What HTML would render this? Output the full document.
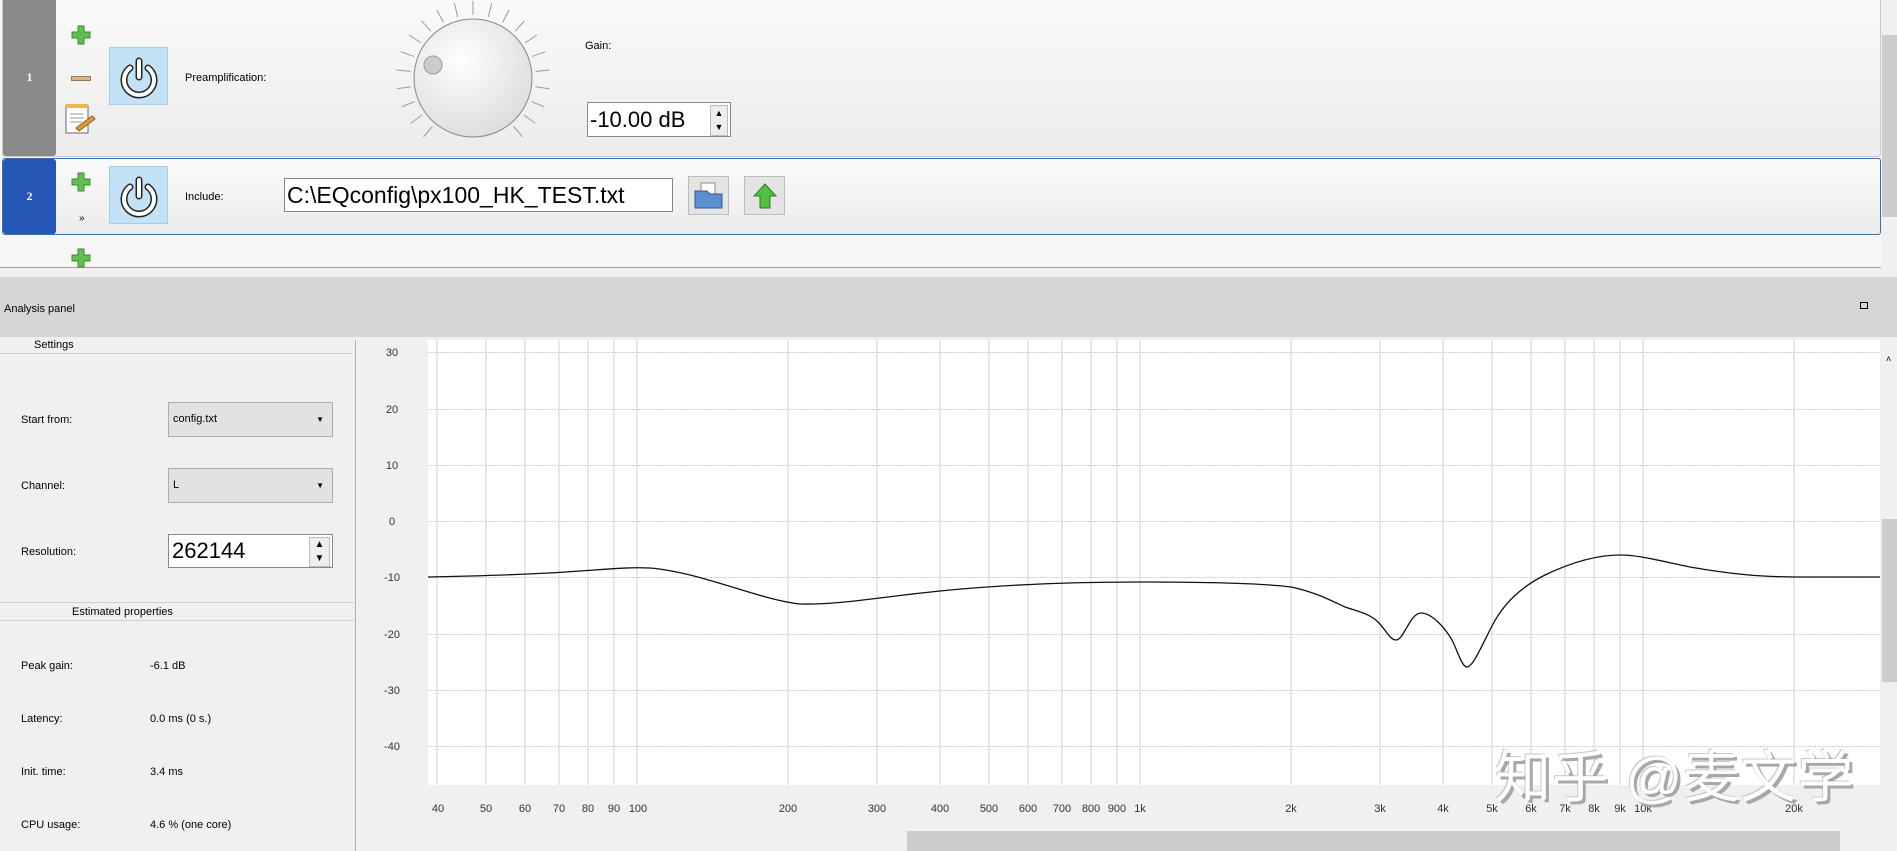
<!DOCTYPE html>
<html><head><meta charset="utf-8"><style>
body{margin:0;width:1897px;height:851px;overflow:hidden;background:#f0f0f0;font-family:"Liberation Sans",sans-serif;font-size:11px;color:#000;position:relative}
.a{position:absolute}
.row{position:absolute;left:2px;width:1877px;background:linear-gradient(#fafafa,#ececec);border:1px solid #c8c8c8;border-radius:3px}
.tab{position:absolute;left:0;top:0;bottom:0;width:54px;color:#fff;font-family:"Liberation Serif",serif;font-weight:bold;font-size:12px;display:flex;align-items:center;justify-content:center;border-radius:3px}
.pw{position:absolute;width:59px;height:58px;background:#c4e2f6;border:1px solid #a9cde6;box-sizing:border-box}
.cb{position:absolute;left:168px;width:165px;height:35px;border:1px solid #adadad;background:#e2e2e2;box-sizing:border-box;font-size:11px;line-height:33px;padding-left:4px}
.cb:after{content:"▼";position:absolute;right:8px;font-size:8px}
.lbl{position:absolute;left:21px}
.val{position:absolute;left:150px}
</style></head><body>
<div class="a" style="left:0;top:0;width:1881px;height:267px;border-bottom:1px solid #a0a0a0;background:#f6f6f6"></div>
<div class="row" style="top:-3px;height:158px"><div class="tab" style="background:#8a8a8a;width:53px">1</div></div>
<div class="row" style="top:158px;height:75px;border-color:#3c6fb0"><div class="tab" style="background:#2457b5;width:53px">2</div></div>
<svg class="a" style="left:71px;top:25px" width="20" height="20"><path d="M7 1h6v6h6v6h-6v6H7v-6H1V7h6z" fill="#5fbf4f" stroke="#3c8a30"/></svg>
<svg class="a" style="left:71px;top:172px" width="20" height="20"><path d="M7 1h6v6h6v6h-6v6H7v-6H1V7h6z" fill="#5fbf4f" stroke="#3c8a30"/></svg>
<svg class="a" style="left:71px;top:248px" width="20" height="20"><path d="M7 1h6v6h6v6h-6v6H7v-6H1V7h6z" fill="#5fbf4f" stroke="#3c8a30"/></svg>
<div class="a" style="left:71px;top:76px;width:20px;height:5px;background:#d8b88a;border:1px solid #9a7a50;box-sizing:border-box"></div>
<svg class="a" style="left:64px;top:102px" width="34" height="34"><rect x="2" y="4" width="22" height="27" fill="#fff" stroke="#666"/><rect x="2" y="2" width="22" height="4" fill="#e8b84a"/><path d="M6 12h14M6 16h14M6 20h12" stroke="#999"/><path d="M12 26l16-12 3 3-16 12z" fill="#e89a30" stroke="#8a5a20"/></svg>
<div class="a" style="left:79px;top:213px;font-size:10px">»</div>
<div class="pw" style="left:109px;top:47px"><svg width="58" height="58"><path d="M20 20a15 15 0 1 0 18 0" fill="none" stroke="#222" stroke-width="7" stroke-linecap="round"/><path d="M20 20a15 15 0 1 0 18 0" fill="none" stroke="#fff" stroke-width="4" stroke-linecap="round"/><path d="M29 13v16" stroke="#222" stroke-width="7" stroke-linecap="round"/><path d="M29 13v16" stroke="#fff" stroke-width="4" stroke-linecap="round"/></svg></div>
<div class="pw" style="left:109px;top:166px"><svg width="58" height="58"><path d="M20 20a15 15 0 1 0 18 0" fill="none" stroke="#222" stroke-width="7" stroke-linecap="round"/><path d="M20 20a15 15 0 1 0 18 0" fill="none" stroke="#fff" stroke-width="4" stroke-linecap="round"/><path d="M29 13v16" stroke="#222" stroke-width="7" stroke-linecap="round"/><path d="M29 13v16" stroke="#fff" stroke-width="4" stroke-linecap="round"/></svg></div>
<div class="a" style="left:185px;top:72px">Preamplification:</div>
<div class="a" style="left:185px;top:191px">Include:</div>
<svg class="a" style="left:393px;top:-2px" width="160" height="160">
<g stroke="#999" stroke-width="1">
<g transform="translate(80,80)">
<line x1="0" y1="-63" x2="0" y2="-77" transform="rotate(-140)"/><line x1="0" y1="-63" x2="0" y2="-77" transform="rotate(-126)"/><line x1="0" y1="-63" x2="0" y2="-77" transform="rotate(-112)"/><line x1="0" y1="-63" x2="0" y2="-77" transform="rotate(-98)"/><line x1="0" y1="-63" x2="0" y2="-77" transform="rotate(-84)"/><line x1="0" y1="-63" x2="0" y2="-77" transform="rotate(-70)"/><line x1="0" y1="-63" x2="0" y2="-77" transform="rotate(-56)"/><line x1="0" y1="-63" x2="0" y2="-77" transform="rotate(-42)"/><line x1="0" y1="-63" x2="0" y2="-77" transform="rotate(-28)"/><line x1="0" y1="-63" x2="0" y2="-77" transform="rotate(-14)"/><line x1="0" y1="-63" x2="0" y2="-77"/><line x1="0" y1="-63" x2="0" y2="-77" transform="rotate(14)"/><line x1="0" y1="-63" x2="0" y2="-77" transform="rotate(28)"/><line x1="0" y1="-63" x2="0" y2="-77" transform="rotate(42)"/><line x1="0" y1="-63" x2="0" y2="-77" transform="rotate(56)"/><line x1="0" y1="-63" x2="0" y2="-77" transform="rotate(70)"/><line x1="0" y1="-63" x2="0" y2="-77" transform="rotate(84)"/><line x1="0" y1="-63" x2="0" y2="-77" transform="rotate(98)"/><line x1="0" y1="-63" x2="0" y2="-77" transform="rotate(112)"/><line x1="0" y1="-63" x2="0" y2="-77" transform="rotate(126)"/><line x1="0" y1="-63" x2="0" y2="-77" transform="rotate(140)"/>
</g></g>
<defs><radialGradient id="kg" cx="0.4" cy="0.35" r="0.7"><stop offset="0" stop-color="#fff"/><stop offset="1" stop-color="#dcdcdc"/></radialGradient></defs>
<circle cx="80" cy="80" r="59" fill="url(#kg)" stroke="#888"/>
<circle cx="40" cy="67" r="9" fill="#ccc" stroke="#999"/>
</svg>
<div class="a" style="left:585px;top:40px">Gain:</div>
<div class="a" style="left:587px;top:102px;width:144px;height:35px;background:#fff;border:1px solid #888;box-sizing:border-box;font-size:22px;line-height:33px;padding-left:2px">-10.00 dB<div class="a" style="right:2px;top:2px;width:16px;height:29px;background:#eee;border:1px solid #bbb;font-size:9px;line-height:14px;text-align:center">▲<br>▼</div></div>
<div class="a" style="left:284px;top:178px;width:389px;height:34px;background:#fff;border:1px solid #888;box-sizing:border-box;font-size:23px;line-height:32px;padding-left:2px">C:\EQconfig\px100_HK_TEST.txt</div>
<div class="a" style="left:688px;top:176px;width:41px;height:39px;background:#e4e4e4;border:1px solid #bbb;box-sizing:border-box"><svg width="40" height="38"><rect x="12" y="6" width="14" height="14" fill="#fff" stroke="#888"/><path d="M6 14h12l3 3h12v14H6z" fill="#5a8fd0" stroke="#2f5a90"/></svg></div>
<div class="a" style="left:744px;top:176px;width:41px;height:39px;background:#e4e4e4;border:1px solid #bbb;box-sizing:border-box"><svg width="40" height="38"><path d="M20 7l11 12h-6v12h-10V19H9z" fill="#4fc040" stroke="#2a7a20"/></svg></div>
<div class="a" style="left:1882px;top:0;width:15px;height:267px;background:#f0f0f0"></div>
<div class="a" style="left:1882px;top:35px;width:15px;height:182px;background:#cdcdcd"></div>
<div class="a" style="left:0;top:277px;width:1897px;height:60px;background:#d6d6d6"></div>
<div class="a" style="left:4px;top:303px;font-size:11px">Analysis panel</div>
<div class="a" style="left:1860px;top:302px;width:8px;height:7px;border:1px solid #000;box-sizing:border-box"></div>
<div class="a" style="left:0;top:353px;width:352px;border-top:1px solid #d0d0d0"></div>
<div class="a" style="left:28px;top:339px;background:#f0f0f0;padding:0 6px">Settings</div>
<div class="lbl" style="top:414px">Start from:</div><div class="cb" style="top:402px">config.txt</div>
<div class="lbl" style="top:480px">Channel:</div><div class="cb" style="top:468px">L</div>
<div class="lbl" style="top:546px">Resolution:</div>
<div class="a" style="left:168px;top:534px;width:165px;height:34px;background:#fff;border:1px solid #888;box-sizing:border-box;font-size:22px;line-height:32px;padding-left:3px">262144<div class="a" style="right:2px;top:2px;width:19px;height:28px;background:#eee;border:1px solid #bbb;font-size:10px;line-height:14px;text-align:center">▲<br>▼</div></div>
<div class="a" style="left:0;top:602px;width:354px;border-top:1px solid #d0d0d0"></div>
<div class="a" style="left:0;top:620px;width:354px;border-top:1px solid #d0d0d0"></div>
<div class="a" style="left:66px;top:606px;background:#f0f0f0;padding:0 6px">Estimated properties</div>
<div class="lbl" style="top:660px">Peak gain:</div><div class="val" style="top:660px">-6.1 dB</div>
<div class="lbl" style="top:713px">Latency:</div><div class="val" style="top:713px">0.0 ms (0 s.)</div>
<div class="lbl" style="top:766px">Init. time:</div><div class="val" style="top:766px">3.4 ms</div>
<div class="lbl" style="top:819px">CPU usage:</div><div class="val" style="top:819px">4.6 % (one core)</div>
<div class="a" style="left:355px;top:340px;width:1542px;height:511px;border-left:1px solid #b0b0b0;background:#f0f0f0"></div>
<svg class="a" style="left:0;top:0" width="1897" height="851" font-family="Liberation Sans" font-size="11" fill="#333">
<rect x="428" y="340" width="1452" height="445" fill="#fff"/>
<g stroke="#d0d0d0" stroke-width="1">
<path d="M437 340V785M486 340V785M525 340V785M559 340V785M588 340V785M614 340V785M637 340V785M788 340V785M877 340V785M940 340V785M989 340V785M1028 340V785M1062 340V785M1091 340V785M1117 340V785M1140 340V785M1291 340V785M1380 340V785M1443 340V785M1492 340V785M1531 340V785M1565 340V785M1594 340V785M1620 340V785M1643 340V785M1794 340V785"/>
<path d="M428 352.5H1880M428 409.5H1880M428 465.5H1880M428 521.5H1880M428 577.5H1880M428 634.5H1880M428 690.5H1880M428 746.5H1880" stroke-dasharray="2 1"/>
</g>
<g text-anchor="middle"><text x="392" y="356">30</text><text x="392" y="413">20</text><text x="392" y="469">10</text><text x="392" y="525">0</text><text x="392" y="581">-10</text><text x="392" y="638">-20</text><text x="392" y="694">-30</text><text x="392" y="750">-40</text>
<text x="438" y="812">40</text><text x="486" y="812">50</text><text x="525" y="812">60</text><text x="559" y="812">70</text><text x="588" y="812">80</text><text x="614" y="812">90</text><text x="638" y="812">100</text><text x="788" y="812">200</text><text x="877" y="812">300</text><text x="940" y="812">400</text><text x="989" y="812">500</text><text x="1028" y="812">600</text><text x="1062" y="812">700</text><text x="1091" y="812">800</text><text x="1117" y="812">900</text><text x="1140" y="812">1k</text><text x="1291" y="812">2k</text><text x="1380" y="812">3k</text><text x="1443" y="812">4k</text><text x="1492" y="812">5k</text><text x="1531" y="812">6k</text><text x="1565" y="812">7k</text><text x="1594" y="812">8k</text><text x="1620" y="812">9k</text><text x="1643" y="812">10k</text><text x="1794" y="812">20k</text></g>
<path d="M428 577 C480 576 540 574 580 571 C610 569 630 567 650 568 C700 572 760 600 800 604 C840 605 880 597 940 591 C1000 585 1060 582 1140 582 C1200 582 1260 583 1291 587 C1315 592 1330 600 1345 607 C1360 612 1370 614 1378 622 C1386 630 1390 640 1396 640 C1404 640 1410 613 1421 613 C1432 613 1445 628 1452 640 C1458 652 1462 667 1467 667 C1473 667 1482 645 1492 626 C1505 600 1525 585 1545 575 C1570 563 1595 555 1620 555 C1640 555 1660 561 1690 567 C1730 574 1760 577 1800 577 L1880 577" fill="none" stroke="#111" stroke-width="1.3"/>
</svg>
<div class="a" style="left:1495px;top:733px;font-size:56px;letter-spacing:1px;color:#fff;text-shadow:3px 3px 0 #a8a8a8,-1px -1px 0 #c8c8c8;font-family:'Liberation Sans','Noto Sans CJK SC',sans-serif;white-space:nowrap">知乎 @麦文学</div>
<div class="a" style="left:1882px;top:341px;width:15px;height:490px;background:#f0f0f0"></div>
<div class="a" style="left:1882px;top:519px;width:15px;height:163px;background:#cdcdcd"></div>
<div class="a" style="left:1886px;top:354px;font-size:9px">˄</div>
<div class="a" style="left:356px;top:831px;width:1526px;height:20px;background:#f0f0f0"></div>
<div class="a" style="left:907px;top:831px;width:933px;height:20px;background:#cdcdcd"></div>
</body></html>
